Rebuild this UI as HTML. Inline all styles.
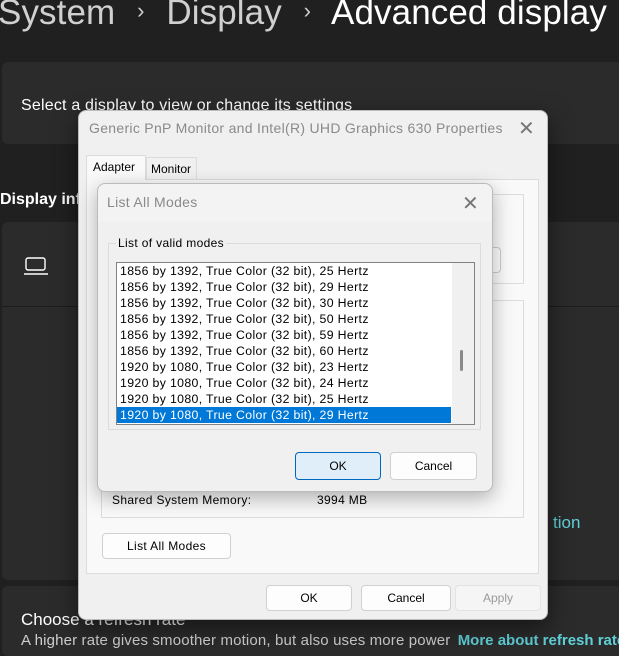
<!DOCTYPE html>
<html><head><style>
*{margin:0;padding:0;box-sizing:border-box}
body{width:619px;height:649px;overflow:hidden;background:#202020;font-family:"Liberation Sans",sans-serif;position:relative;color:#fff}
.abs{position:absolute}
.win{font-size:12px;color:#000;white-space:nowrap}
.btn{position:absolute;background:#fdfdfd;border:1px solid #d0d0d0;border-radius:4px;font-size:12px;color:#000;text-align:center}
.lst{letter-spacing:0.35px}
</style></head><body>
<div class="abs" style="left:-2px;top:-7px;font-size:35px;color:#d0d0d0;white-space:nowrap;letter-spacing:0.1px">System <span style="font-size:22px;position:relative;top:-6px;margin:0 12px">›</span> Display <span style="font-size:22px;position:relative;top:-6px;margin:0 12px">›</span> <span style="color:#fff">Advanced display</span></div>
<div class="abs" style="left:2px;top:62px;width:620px;height:82px;background:#2b2b2b;border-radius:6px"></div>
<div class="abs" style="left:21px;top:97px;font-size:16px;color:#fff;letter-spacing:0.2px">Select a display to view or change its settings</div>
<div class="abs" style="left:0;top:191px;font-size:16px;font-weight:bold;color:#fff">Display information</div>
<div class="abs" style="left:2px;top:222px;width:620px;height:358px;background:#2b2b2b;border-radius:6px"></div>
<div class="abs" style="left:2px;top:306px;width:620px;height:1px;background:#1c1c1c"></div>
<svg class="abs" style="left:23px;top:256px" width="26" height="20"><rect x="3" y="2" width="19" height="12" rx="2" fill="none" stroke="#fff" stroke-width="1.4"/><line x1="1" y1="18" x2="25" y2="18" stroke="#fff" stroke-width="1.4"/></svg>
<div class="abs" style="left:553px;top:513px;font-size:17px;color:#60d0d8">tion</div>
<div class="abs" style="left:2px;top:586px;width:620px;height:70px;background:#2b2b2b;border-radius:6px"></div>
<div class="abs" style="left:21px;top:610px;font-size:17px;color:#fff">Choose a refresh rate</div>
<div class="abs" style="left:21px;top:632px;font-size:15px;color:#cfcfcf;white-space:nowrap;letter-spacing:0.15px">A higher rate gives smoother motion, but also uses more power <span style="color:#60d0d8;margin-left:3px;font-weight:bold;letter-spacing:0">More about refresh rate</span></div>

<!-- Properties dialog -->
<div class="abs" style="left:78px;top:110px;width:470px;height:510px;background:#f0f0f0;border:1px solid #bbb;border-radius:8px;box-shadow:0 8px 24px rgba(0,0,0,.5)"></div>
<div class="abs" style="left:89px;top:120px;font-size:14px;color:#8a8a8a;white-space:nowrap;letter-spacing:0.3px">Generic PnP Monitor and Intel(R) UHD Graphics 630 Properties</div>
<div class="abs" style="left:518px;top:116px;font-size:20px;color:#777">✕</div>
<div class="abs" style="left:86px;top:179px;width:453px;height:395px;background:#f9f9f9;border:1px solid #dcdcdc"></div>
<div class="abs win" style="left:86px;top:155px;width:60px;height:25px;background:#f9f9f9;border:1px solid #dcdcdc;border-bottom:none;padding:4px 0 0 6px">Adapter</div>
<div class="abs win" style="left:146px;top:157px;width:51px;height:22px;background:#f0f0f0;border:1px solid #dcdcdc;border-bottom:none;padding:4px 0 0 4px">Monitor</div>
<div class="abs" style="left:101px;top:194px;width:423px;height:90px;border:1px solid #dcdcdc"></div>
<div class="abs" style="left:470px;top:247px;width:31px;height:26px;border:1px solid #ccc;border-radius:4px;background:#fdfdfd"></div>
<div class="abs" style="left:101px;top:300px;width:423px;height:218px;border:1px solid #dcdcdc"></div>
<div class="abs win lst" style="left:112px;top:493px">Shared System Memory:</div>
<div class="abs win lst" style="left:317px;top:493px">3994 MB</div>
<div class="btn lst" style="left:102px;top:533px;width:129px;height:26px;line-height:24px">List All Modes</div>
<div class="btn" style="left:266px;top:585px;width:86px;height:26px;line-height:24px">OK</div>
<div class="btn" style="left:361px;top:585px;width:90px;height:26px;line-height:24px">Cancel</div>
<div class="btn" style="left:455px;top:585px;width:86px;height:26px;line-height:24px;background:#f5f5f5;border-color:#e3e3e3;color:#9a9a9a">Apply</div>

<!-- List all modes -->
<div class="abs" style="left:97px;top:183px;width:396px;height:309px;background:#f0f0f0;border:1px solid #bbb;border-radius:8px;box-shadow:0 6px 20px rgba(0,0,0,.3)"></div>
<div class="abs" style="left:98px;top:184px;width:394px;height:38px;background:#f3f3f3;border-radius:8px 8px 0 0"></div>
<div class="abs" style="left:107px;top:194px;font-size:14px;color:#8a8a8a;letter-spacing:0.3px">List All Modes</div>
<div class="abs" style="left:462px;top:191px;font-size:20px;color:#777">✕</div>
<div class="abs" style="left:108px;top:243px;width:373px;height:187px;border:1px solid #dcdcdc"></div>
<div class="abs win lst" style="left:116px;top:236px;background:#f0f0f0;padding:0 2px">List of valid modes</div>
<div class="abs" style="left:116px;top:262px;width:359px;height:163px;background:#fff;border:1px solid #828282;overflow:hidden">
<div class="abs" style="right:0;top:0;width:22px;height:161px;background:#f0f0f0"></div>
<div class="abs" style="right:11px;top:87px;width:3px;height:21px;background:#8a8a8a;border-radius:2px"></div>
<div class="abs win lst" style="left:3px;top:0;line-height:16px;font-size:12.3px">
1856 by 1392, True Color (32 bit), 25 Hertz<br>1856 by 1392, True Color (32 bit), 29 Hertz<br>1856 by 1392, True Color (32 bit), 30 Hertz<br>1856 by 1392, True Color (32 bit), 50 Hertz<br>1856 by 1392, True Color (32 bit), 59 Hertz<br>1856 by 1392, True Color (32 bit), 60 Hertz<br>1920 by 1080, True Color (32 bit), 23 Hertz<br>1920 by 1080, True Color (32 bit), 24 Hertz<br>1920 by 1080, True Color (32 bit), 25 Hertz</div>
<div class="abs win lst" style="left:0;top:144px;width:334px;height:16px;line-height:16px;background:#0078d7;color:#fff;padding-left:3px;font-size:12.3px">1920 by 1080, True Color (32 bit), 29 Hertz</div>
</div>
<div class="btn" style="left:295px;top:452px;width:86px;height:28px;line-height:26px;background:#e0eef9;border-color:#0067c0">OK</div>
<div class="btn" style="left:390px;top:452px;width:87px;height:28px;line-height:26px">Cancel</div>
</body></html>
